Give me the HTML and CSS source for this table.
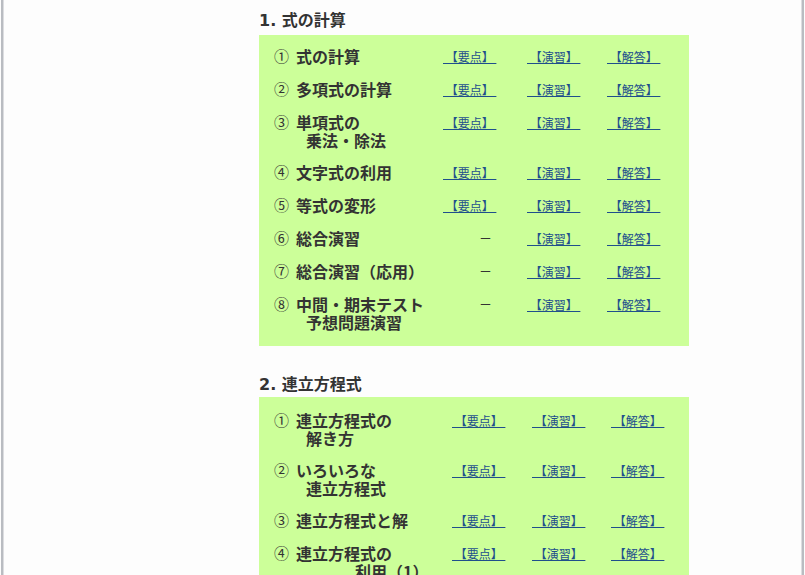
FILE: index.html
```html
<!DOCTYPE html>
<html lang="ja">
<head>
<meta charset="utf-8">
<title>数学</title>
<link rel="stylesheet" href="styles.css">
</head>
<body>
<div class="frame">
  <div class="content">
    <section class="sec sec1">
      <h2 class="title"><span class="no">1.</span> 式の計算</h2>
      <div class="box">
        <div class="row"><div class="item"><span class="num">①</span><span class="txt">式の計算</span></div><a class="lk" href="#">&nbsp;【要点】&nbsp;</a><a class="lk" href="#">&nbsp;【演習】&nbsp;</a><a class="lk" href="#">&nbsp;【解答】&nbsp;</a></div>
        <div class="row"><div class="item"><span class="num">②</span><span class="txt">多項式の計算</span></div><a class="lk" href="#">&nbsp;【要点】&nbsp;</a><a class="lk" href="#">&nbsp;【演習】&nbsp;</a><a class="lk" href="#">&nbsp;【解答】&nbsp;</a></div>
        <div class="row"><div class="item"><span class="num">③</span><span class="txt">単項式の<span class="l2">乗法・除法</span></span></div><a class="lk" href="#">&nbsp;【要点】&nbsp;</a><a class="lk" href="#">&nbsp;【演習】&nbsp;</a><a class="lk" href="#">&nbsp;【解答】&nbsp;</a></div>
        <div class="row"><div class="item"><span class="num">④</span><span class="txt">文字式の利用</span></div><a class="lk" href="#">&nbsp;【要点】&nbsp;</a><a class="lk" href="#">&nbsp;【演習】&nbsp;</a><a class="lk" href="#">&nbsp;【解答】&nbsp;</a></div>
        <div class="row"><div class="item"><span class="num">⑤</span><span class="txt">等式の変形</span></div><a class="lk" href="#">&nbsp;【要点】&nbsp;</a><a class="lk" href="#">&nbsp;【演習】&nbsp;</a><a class="lk" href="#">&nbsp;【解答】&nbsp;</a></div>
        <div class="row"><div class="item"><span class="num">⑥</span><span class="txt">総合演習</span></div><span class="dash">－</span><a class="lk" href="#">&nbsp;【演習】&nbsp;</a><a class="lk" href="#">&nbsp;【解答】&nbsp;</a></div>
        <div class="row"><div class="item"><span class="num">⑦</span><span class="txt">総合演習（応用）</span></div><span class="dash">－</span><a class="lk" href="#">&nbsp;【演習】&nbsp;</a><a class="lk" href="#">&nbsp;【解答】&nbsp;</a></div>
        <div class="row"><div class="item"><span class="num">⑧</span><span class="txt">中間・期末テスト<span class="l2">予想問題演習</span></span></div><span class="dash">－</span><a class="lk" href="#">&nbsp;【演習】&nbsp;</a><a class="lk" href="#">&nbsp;【解答】&nbsp;</a></div>
      </div>
    </section>

    <section class="sec sec2">
      <h2 class="title"><span class="no">2.</span> 連立方程式</h2>
      <div class="box">
        <div class="row"><div class="item"><span class="num">①</span><span class="txt">連立方程式の<span class="l2">解き方</span></span></div><a class="lk" href="#">&nbsp;【要点】&nbsp;</a><a class="lk" href="#">&nbsp;【演習】&nbsp;</a><a class="lk" href="#">&nbsp;【解答】&nbsp;</a></div>
        <div class="row"><div class="item"><span class="num">②</span><span class="txt">いろいろな<span class="l2">連立方程式</span></span></div><a class="lk" href="#">&nbsp;【要点】&nbsp;</a><a class="lk" href="#">&nbsp;【演習】&nbsp;</a><a class="lk" href="#">&nbsp;【解答】&nbsp;</a></div>
        <div class="row"><div class="item"><span class="num">③</span><span class="txt">連立方程式と解</span></div><a class="lk" href="#">&nbsp;【要点】&nbsp;</a><a class="lk" href="#">&nbsp;【演習】&nbsp;</a><a class="lk" href="#">&nbsp;【解答】&nbsp;</a></div>
        <div class="row"><div class="item"><span class="num">④</span><span class="txt">連立方程式の<span class="l2 wide">利用（1）</span></span></div><a class="lk" href="#">&nbsp;【要点】&nbsp;</a><a class="lk" href="#">&nbsp;【演習】&nbsp;</a><a class="lk" href="#">&nbsp;【解答】&nbsp;</a></div>
        <div class="row"><div class="item"><span class="num">⑤</span><span class="txt">連立方程式の<span class="l2 wide">利用（2）</span></span></div><a class="lk" href="#">&nbsp;【要点】&nbsp;</a><a class="lk" href="#">&nbsp;【演習】&nbsp;</a><a class="lk" href="#">&nbsp;【解答】&nbsp;</a></div>
      </div>
    </section>
  </div>
</div>
</body>
</html>
```

FILE: styles.css
```css
html, body {
  margin: 0;
  padding: 0;
  background: #fdfdfd;
}

body {
  font-family: "Noto Sans CJK JP", "Noto Sans", sans-serif;
  color: #333333;
}

.frame {
  min-height: 575px;
  margin: 0 1px 0 1px;
  border-left: 2px solid #b9bcc1;
  border-right: 2px solid #b9bcc1;
  box-shadow: inset 1px 0 0 #dcdde0, inset -1px 0 0 #dcdde0;
  box-sizing: border-box;
  overflow: hidden;
}

.content {
  margin-left: 256px;
  width: 430px;
}

.sec {
  margin: 0;
}

.sec2 {
  margin-top: 27px;
}

.title {
  margin: 0 0 4px 0;
  padding-top: 9px;
  font-size: 16px;
  line-height: 20px;
  font-weight: 700;
  color: #333333;
}

.sec2 .title {
  padding-top: 0;
  margin-bottom: 2px;
}

.title .no {
  font-family: "DejaVu Sans", sans-serif;
  font-size: 16px;
  margin-right: 2px;
}

.box {
  background: #ccff99;
  padding: 5px 0 8px 15px;
}

.sec2 .box {
  padding-top: 7px;
}

.row {
  display: grid;
  padding: 7px 0 8px 0;
  line-height: 18px;
  align-items: start;
}

.sec1 .row {
  grid-template-columns: 169px 84px 80px 60px;
}

.sec2 .row {
  grid-template-columns: 178px 80px 79px 60px;
}

.item {
  display: flex;
  font-size: 16px;
  font-weight: 700;
  color: #333333;
}

.num {
  width: 22px;
  flex: none;
  font-weight: 400;
  font-size: 15px;
}

.txt {
  display: block;
  white-space: nowrap;
}

.l2 {
  display: block;
  padding-left: 10px;
  margin-bottom: -1px;
}

.l2.wide {
  padding-left: 59px;
}

.lk {
  justify-self: start;
  font-size: 12px;
  line-height: 16px;
  margin-top: 2px;
  color: #1f4f8c;
  text-decoration: underline;
  white-space: nowrap;
}

.dash {
  font-size: 13px;
  line-height: 18px;
  padding-left: 36px;
  color: #333333;
}
```
